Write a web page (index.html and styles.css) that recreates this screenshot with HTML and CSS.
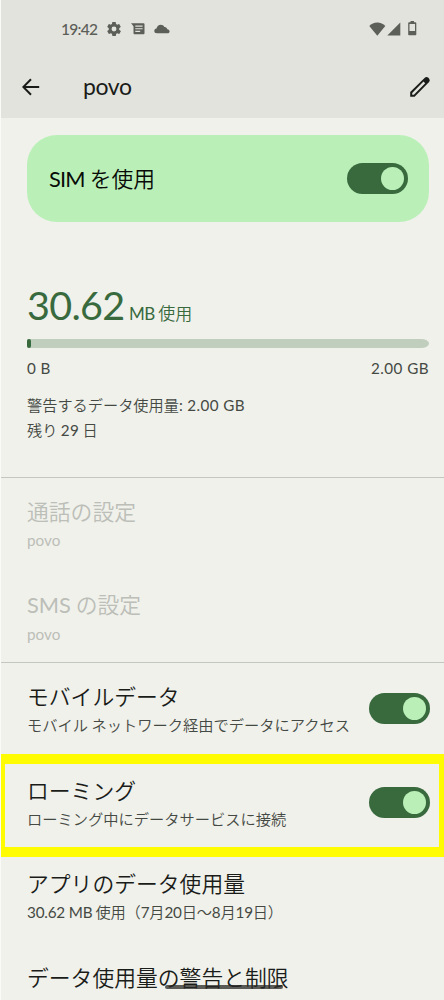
FILE: index.html
```html
<!DOCTYPE html>
<html lang="ja">
<head>
<meta charset="utf-8">
<title>povo</title>
<link rel="stylesheet" href="styles.css">
</head>
<body>
<div class="screen">
  <header class="header">
    <div class="status">
      <span class="clock">19:42</span>
      <svg class="ic-gear" width="14" height="14" viewBox="2 2 20 20"><path fill-rule="evenodd" d="M19.4 13c0-.3.1-.6.1-1s0-.7-.1-1l2.1-1.700c.2-.1.2-.4.1-.6l-2-3.500c-.1-.2-.4-.3-.6-.2l-2.500 1c-.5-.4-1.100-.7-1.700-1L14.500 2.400c0-.2-.2-.4-.5-.4h-4c-.3 0-.5.2-.5.400L9.100 5c-.6.200-1.200.600-1.700 1L5 5c-.2-.1-.5 0-.6.2l-2 3.500c-.1.200-.1.400.1.600L4.600 11c0 .3-.1.700-.1 1s0 .7.100 1l-2.100 1.700c-.2.100-.2.400-.1.600l2 3.500c.1.200.4.300.6.200l2.500-1c.5.400 1.100.7 1.700 1l.4 2.600c0 .2.200.4.500.4h4c.3 0 .5-.2.500-.4l.4-2.600c.6-.3 1.200-.6 1.700-1l2.500 1c.2.100.5 0 .6-.2l2-3.500c.1-.2.100-.5-.1-.6zM12 15.500a3.500 3.500 0 1 1 0-7 3.500 3.500 0 0 1 0 7z"/></svg>
      <svg class="ic-msg" width="14" height="12" viewBox="0 0 14 12"><path fill-rule="evenodd" d="M0 0.300H12.500Q13.500.3 13.500 1.300V10.300Q13.500 11.300 12.500 11.300H3.500Q2.500 11.300 2.500 10.300V3.200ZM4.300 2.600V3.700H11.600V2.600ZM4.300 5.200V6.300H11.600V5.200ZM4.300 7.800V8.900H9.200V7.800Z"/></svg>
      <svg class="ic-cloud" width="16" height="10" viewBox="0 0 16 10"><path d="M3 9.300C1.300 9.300.3 8.300.3 7 .3 5.700 1.200 4.700 2.500 4.600 3 2.200 4.700.7 6.800.7 8.400.7 9.700 1.500 10.400 2.900 12 2.800 13.100 3.900 13.300 5.300 14.700 5.500 15.600 6.300 15.600 7.500 15.600 8.600 14.700 9.300 13.600 9.300Z"/></svg>
      <span class="spacer"></span>
      <svg width="17" height="14" viewBox="0 0 17 14"><path d="M.3 4Q3.400.5 8.300.5T16.300 4L8.300 13.700Z"/></svg>
      <svg class="ic-signal" width="14" height="14" viewBox="0 0 14 14"><path d="M13.300.5V13.500H.3Z"/></svg>
      <svg class="ic-battery" width="9" height="15" viewBox="0 0 9 15"><path fill-rule="evenodd" d="M2.500 0H6V1.300H7.500Q8.300 1.300 8.300 2.200V13.500Q8.300 14.300 7.500 14.300H1Q.2 14.300.2 13.500V2.200Q.2 1.300 1 1.300H2.500ZM1.500 3V9.900H7V3Z"/></svg>
    </div>
    <div class="appbar">
      <svg class="ic-back" width="18" height="18" viewBox="0 0 18 18"><path d="M17.200 9H1.500M9 1.200L1.300 9L9 16.800"/></svg>
      <h1 class="heading">povo</h1>
      <svg class="ic-edit" width="22" height="22" viewBox="0 0 22 22"><path fill-rule="evenodd" d="M1.200 16L15.800 1.700Q17.500.2 19.400 1.800L20 2.500Q21.600 4.300 20.100 5.900L5.600 20.700H1.200ZM3.200 16.900V18.700H4.900L16.200 7.300 14.500 5.600Z"/></svg>
    </div>
  </header>

  <main class="content">
    <section class="sim-card"><span class="title"><span class="en">SIM</span> を使用</span><span class="switch"></span></section>

    <section class="usage">
      <div class="amount"><span class="number">30.62</span><span class="unit"><span class="en">MB</span> 使用</span></div>
      <div class="meter"><span class="meter-fill"></span></div>
      <div class="range en"><span>0 B</span><span>2.00 GB</span></div>
      <div class="notes">警告するデータ使用量<span class="en">: 2.00 GB</span><br>残り <span class="en">29</span> 日</div>
    </section>

    <section class="group disabled">
      <div class="row"><div><div class="title">通話の設定</div><div class="sub en">povo</div></div></div>
      <div class="row"><div><div class="title"><span class="en">SMS</span> の設定</div><div class="sub en">povo</div></div></div>
    </section>

    <section class="group">
      <div class="row"><div><div class="title">モバイルデータ</div><div class="sub">モバイル ネットワーク経由でデータにアクセス</div></div><span class="switch"></span></div>
      <div class="row marked"><div><div class="title">ローミング</div><div class="sub">ローミング中にデータサービスに接続</div></div><span class="switch"></span></div>
      <div class="row"><div><div class="title">アプリのデータ使用量</div><div class="sub dates"><span class="en">30.62 MB</span> 使用（<span class="en">7</span>月<span class="en">20</span>日～<span class="en">8</span>月<span class="en">19</span>日）</div></div></div>
      <div class="row"><div><div class="title">データ使用量の警告と制限</div></div></div>
    </section>
  </main>
  <div class="home-bar"></div>
</div>
</body>
</html>
```
FILE: styles.css
```css
*, *::before, *::after { box-sizing: border-box; }
body {
  margin: 0;
  background: #f0f1eb;
  color: #1a1c19;
  font-family: "Noto Sans CJK JP", sans-serif;
  font-weight: 350;
}
.screen {
  position: relative;
  width: 444px;
  height: 1000px;
  overflow: hidden;
  border-left: 1px solid #fafaf8;
}
.en { font-family: Lato, "Noto Sans CJK JP", sans-serif; font-weight: 400; }
.spacer { flex: 1; }
svg { display: block; flex: none; }

.header { height: 118px; background: #e2e3dd; }
.status {
  display: flex;
  align-items: center;
  height: 57px;
  padding: 0 27px 0 60px;
  color: #5c5e58;
  fill: #5c5e58;
}
.clock { width: 37px; font: 500 15.5px/18px Lato, sans-serif; letter-spacing: -.7px; white-space: nowrap; }
.ic-gear { margin-left: 9px; }
.ic-msg { margin-left: 10px; }
.ic-cloud { margin-left: 9px; }
.ic-signal { margin-left: 1px; }
.ic-battery { margin-left: 7px; }
.appbar { display: flex; align-items: center; height: 60px; padding: 0 13px 0 21px; }
.ic-back { fill: none; stroke: #1a1c19; stroke-width: 2; }
.heading { flex: 1; margin: -2px 0 0 43px; font: 400 23px/30px Lato, sans-serif; letter-spacing: -.4px; }
.ic-edit { fill: #1a1c19; }

.sim-card {
  display: flex;
  align-items: center;
  justify-content: space-between;
  height: 87px;
  margin: 17px 15px 0 26px;
  padding: 0 21px 0 22px;
  border-radius: 30px;
  background: #baf0b8;
  color: #080b08;
}
.title { font-size: 21.8px; line-height: 32px; white-space: nowrap; }
.sim-card .en { letter-spacing: -.8px; }
.sub { color: #454943; font-size: 15.25px; line-height: 24px; white-space: nowrap; }
.switch {
  display: flex;
  flex: none;
  justify-content: flex-end;
  width: 61px;
  height: 31px;
  padding: 4px;
  border-radius: 16px;
  background: #386a3e;
}
.switch::after { content: ""; width: 23px; height: 23px; border-radius: 50%; background: #baf0b8; }

.usage { height: 255px; padding: 60px 15px 0 26px; color: #454943; font-size: 15.2px; }
.amount { display: flex; align-items: baseline; height: 57px; color: #386a3e; line-height: 46px; }
.number { width: 102px; font-family: Lato, sans-serif; font-size: 39.5px; font-weight: 400; letter-spacing: -.7px; }
.unit { font-size: 17px; }
.unit .en { letter-spacing: -.6px; }
.meter { height: 9px; border-radius: 2px 9px 9px 2px / 2px 5px 5px 2px; background: #c0cebd; }
.meter-fill { display: block; width: 4px; height: 9px; border-radius: 2px; background: #386a3e; }
.range { display: flex; justify-content: space-between; margin-top: 8px; line-height: 24px; letter-spacing: .45px; }
.notes { margin-top: 12px; line-height: 24px; }
.notes .en { letter-spacing: .4px; }

.group { border-top: 1px solid #c4c7c0; }
.row { display: flex; justify-content: space-between; height: 93.700px; padding: 17px 15px 0 26px; }
.row .switch { margin: 13px -.7px 0 0; }
.disabled { height: 185px; }
.disabled .row { height: 92.500px; padding-top: 17px; }
.disabled .title, .disabled .sub { color: #bcbeb8; }
.disabled .sub { padding-top: 1px; }
.dates { letter-spacing: -.2px; }
.marked { position: relative; }
.marked::before {
  content: "";
  position: absolute;
  inset: -3px 0 auto -1px;
  height: 103px;
  border: solid #fffb00;
  border-width: 10px 5px;
}
.home-bar {
  position: absolute;
  left: 164px;
  top: 985px;
  width: 118px;
  height: 4px;
  border-radius: 2px;
  background: rgba(40, 40, 38, .75);
}
```
